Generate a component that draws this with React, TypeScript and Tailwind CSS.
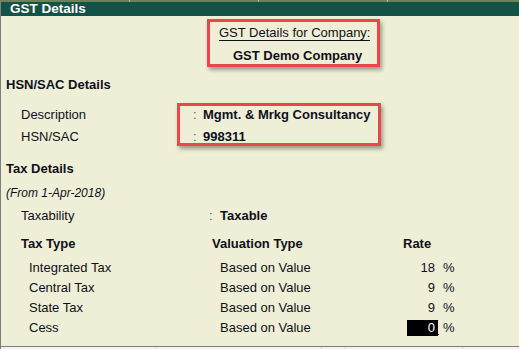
import React from "react";

const taxRows = [
  { type: "Integrated Tax", valuation: "Based on Value", rate: "18" },
  { type: "Central Tax", valuation: "Based on Value", rate: "9" },
  { type: "State Tax", valuation: "Based on Value", rate: "9" },
  { type: "Cess", valuation: "Based on Value", rate: "0", active: true },
];

export default function App() {
  return (
    <div
      className="flex h-[349px] w-[519px] flex-col overflow-hidden border-l border-[#7f7f7f] bg-[#eeefd6] text-[13px] text-[#10101c]"
      style={{ fontFamily: '"Liberation Sans", Arial, sans-serif' }}
    >
      {/* top strip */}
      <div className="flex h-[2px] bg-[#72805a]">
        <div className="w-[129px] border-r border-[#aeb896]" />
        <div className="w-[129px] border-r border-[#aeb896]" />
        <div className="w-[129px] border-r border-[#aeb896]" />
      </div>

      {/* title bar */}
      <div className="h-[14px] bg-[#135347] pl-[9px] text-[13.5px] font-bold leading-[14px] text-white">
        GST Details
      </div>

      <div className="flex flex-1 flex-col">
        {/* company box */}
        <div className="ml-[206px] mt-[3px] h-[48px] w-[173px] border-[3px] border-[#e9474b] shadow-[2px_3px_4px_rgba(0,0,0,0.35)]">
          <div className="pl-[9px] pt-[1px]">
            <span className="inline-block h-[16px] border-b border-[#10101c] leading-[15px]">
              GST Details for Company:
            </span>
          </div>
          <div className="mt-[5px] h-[15px] pl-[23px] font-bold leading-[15px]">
            GST Demo Company
          </div>
        </div>

        <div className="mt-[10px] h-[16px] pl-[5px] font-bold leading-[16px]">
          HSN/SAC Details
        </div>

        {/* HSN rows */}
        <div className="mt-[10px] flex h-[43px]">
          <div className="flex w-[176px] flex-col gap-[7px] pl-[20px] pt-[4px]">
            <div className="h-[15px] leading-[15px]">Description</div>
            <div className="h-[15px] leading-[15px]">HSN/SAC</div>
          </div>
          <div className="flex h-[43px] w-[204px] flex-col gap-[7px] border-[3px] border-[#e9474b] pt-[1px] shadow-[2px_3px_4px_rgba(0,0,0,0.35)]">
            <div className="flex h-[15px] leading-[15px]">
              <span className="w-[23px] pl-[13px] text-[#55556a]">:</span>
              <span className="font-bold">Mgmt. &amp; Mrkg Consultancy</span>
            </div>
            <div className="flex h-[15px] leading-[15px]">
              <span className="w-[23px] pl-[13px] text-[#55556a]">:</span>
              <span className="font-bold">998311</span>
            </div>
          </div>
        </div>

        <div className="mt-[15px] h-[16px] pl-[5px] font-bold leading-[16px]">
          Tax Details
        </div>
        <div className="mt-[8px] h-[16px] pl-[5px] text-[12px] italic leading-[16px]">
          (From 1-Apr-2018)
        </div>

        <div className="mt-[7px] flex h-[16px] leading-[16px]">
          <span className="w-[208px] pl-[20px]">Taxability</span>
          <span className="w-[11px] text-[#55556a]">:</span>
          <span className="font-bold">Taxable</span>
        </div>

        <div className="mt-[12px] flex h-[16px] font-bold leading-[16px]">
          <span className="w-[210px] pl-[20px]">Tax Type</span>
          <span className="w-[192px] pl-[1px]">Valuation Type</span>
          <span>Rate</span>
        </div>

        <div className="mt-[6px] flex flex-col">
          {taxRows.map((row) => (
            <div key={row.type} className="flex h-[20px] items-center leading-[16px]">
              <span className="w-[210px] pl-[28px]">{row.type}</span>
              <span className="w-[192px] pl-[9px]">{row.valuation}</span>
              {row.active ? (
                <span className="ml-[4px] flex w-[31px] items-center">
                  <span className="h-[16px] w-[31px] bg-black pr-[3px] text-right text-white">
                    {row.rate}
                  </span>
                </span>
              ) : (
                <span className="w-[35px] pr-[3px] text-right">{row.rate}</span>
              )}
              <span className="relative ml-[5px]">
                {row.active ? (
                  <span className="absolute -left-[5px] top-[14px] h-[1px] w-[1px] bg-black" />
                ) : null}
                %
              </span>
            </div>
          ))}
        </div>

        <div className="mt-auto" />
      </div>

      {/* bottom edge */}
      <div className="h-[1px] bg-[#7f7f7f]" />
      <div className="flex h-[2px] bg-[#f2f2f2]">
        <div className="w-[156px] border-r border-[#d0d0d0]" />
        <div className="w-[165px] border-r border-[#d0d0d0]" />
        <div className="w-[23px] border-r border-[#e0e0e0]" />
        <div className="w-[118px] border-r border-[#d0d0d0]" />
      </div>
    </div>
  );
}
